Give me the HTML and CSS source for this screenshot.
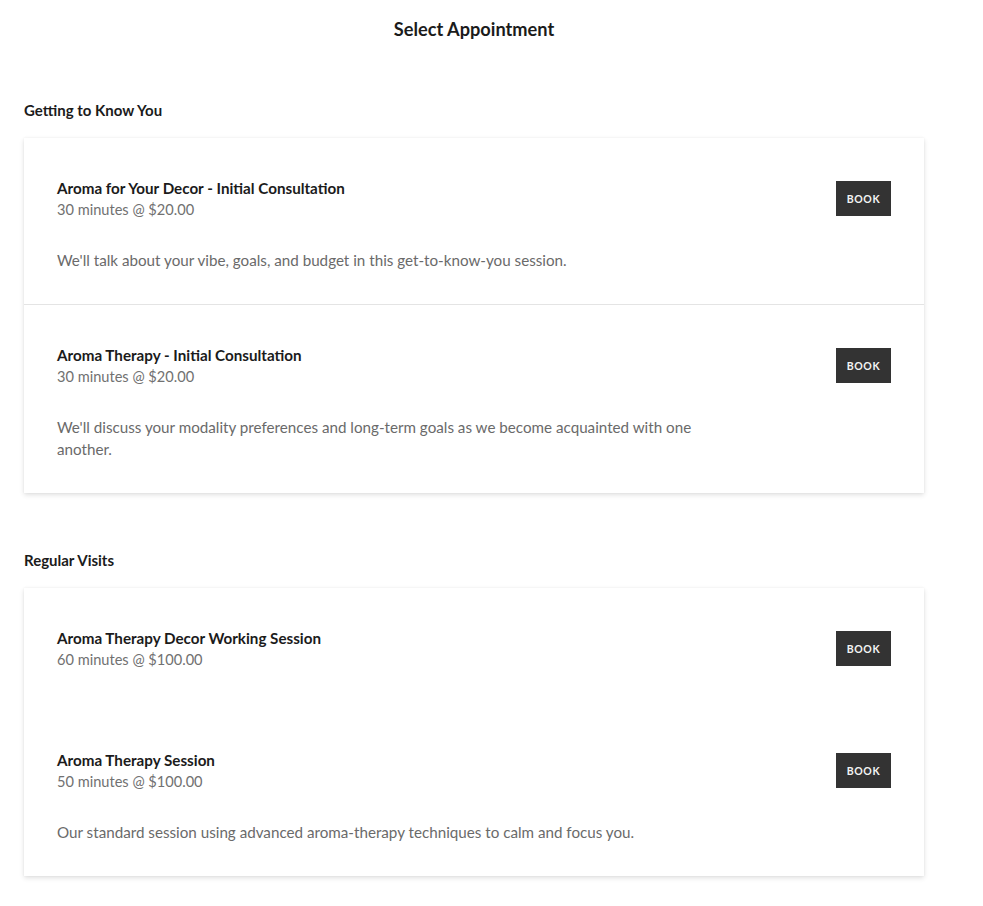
FILE: index.html
```html
<!DOCTYPE html>
<html lang="en">
<head>
<meta charset="utf-8">
<title>Select Appointment</title>
<link rel="stylesheet" href="styles.css">
</head>
<body>
<main class="page">
  <h1 class="page-title">Select Appointment</h1>

  <section class="group">
    <h2 class="group-title">Getting to Know You</h2>
    <div class="card">
      <div class="item">
        <div class="item-info">
          <div class="item-name">Aroma for Your Decor - Initial Consultation</div>
          <div class="item-meta">30 minutes @ $20.00</div>
          <p class="item-desc">We'll talk about your vibe, goals, and budget in this get-to-know-you session.</p>
        </div>
        <button class="book">BOOK</button>
      </div>
      <div class="item item--divided">
        <div class="item-info">
          <div class="item-name">Aroma Therapy - Initial Consultation</div>
          <div class="item-meta">30 minutes @ $20.00</div>
          <p class="item-desc">We'll discuss your modality preferences and long-term goals as we become acquainted with one another.</p>
        </div>
        <button class="book">BOOK</button>
      </div>
    </div>
  </section>

  <section class="group">
    <h2 class="group-title">Regular Visits</h2>
    <div class="card">
      <div class="item item--short">
        <div class="item-info">
          <div class="item-name">Aroma Therapy Decor Working Session</div>
          <div class="item-meta">60 minutes @ $100.00</div>
        </div>
        <button class="book">BOOK</button>
      </div>
      <div class="item">
        <div class="item-info">
          <div class="item-name">Aroma Therapy Session</div>
          <div class="item-meta">50 minutes @ $100.00</div>
          <p class="item-desc">Our standard session using advanced aroma-therapy techniques to calm and focus you.</p>
        </div>
        <button class="book">BOOK</button>
      </div>
    </div>
  </section>
</main>
</body>
</html>
```

FILE: styles.css
```css
* { box-sizing: border-box; }

body {
  margin: 0;
  background: #ffffff;
  font-family: "Lato", "Liberation Sans", sans-serif;
  color: #1b1b1b;
}

.page {
  width: 900px;
  margin-left: 24px;
  padding-bottom: 30px;
}

.page-title {
  margin: 17px 0 0;
  font-size: 18.2px;
  line-height: 24px;
  font-weight: 700;
  text-align: center;
  color: #1b1b1b;
}

.group-title {
  margin: 59px 0 18px;
  font-size: 15px;
  line-height: 20px;
  font-weight: 700;
  color: #1b1b1b;
}

.group + .group .group-title {
  margin-top: 57px;
}

.card {
  background: #fff;
  box-shadow: 0 2px 5px rgba(0, 0, 0, 0.12), 0 0 2px rgba(0, 0, 0, 0.06);
}

.item {
  display: flex;
  justify-content: space-between;
  align-items: flex-start;
  padding: 39px 33px 33px;
}

.item--divided {
  border-top: 1px solid #e4e4e4;
}

.item--short {
  padding-bottom: 39px;
}

.item-info {
  max-width: 660px;
}

.item-name {
  font-size: 15.2px;
  line-height: 22px;
  font-weight: 700;
  color: #1b1b1b;
}

.item-meta {
  font-size: 14.6px;
  line-height: 22px;
  color: #717171;
}

.item-desc {
  margin: 28px 0 0;
  font-size: 15.2px;
  line-height: 22px;
  color: #6a6a6a;
}

.book {
  flex: none;
  width: 55px;
  height: 35px;
  margin-top: 4px;
  padding: 0;
  border: 0;
  border-radius: 0;
  background: #333333;
  color: #f4f4f4;
  font-family: "Lato", "Liberation Sans", sans-serif;
  font-size: 10.5px;
  font-weight: 700;
  letter-spacing: 0.6px;
  cursor: pointer;
}
```
